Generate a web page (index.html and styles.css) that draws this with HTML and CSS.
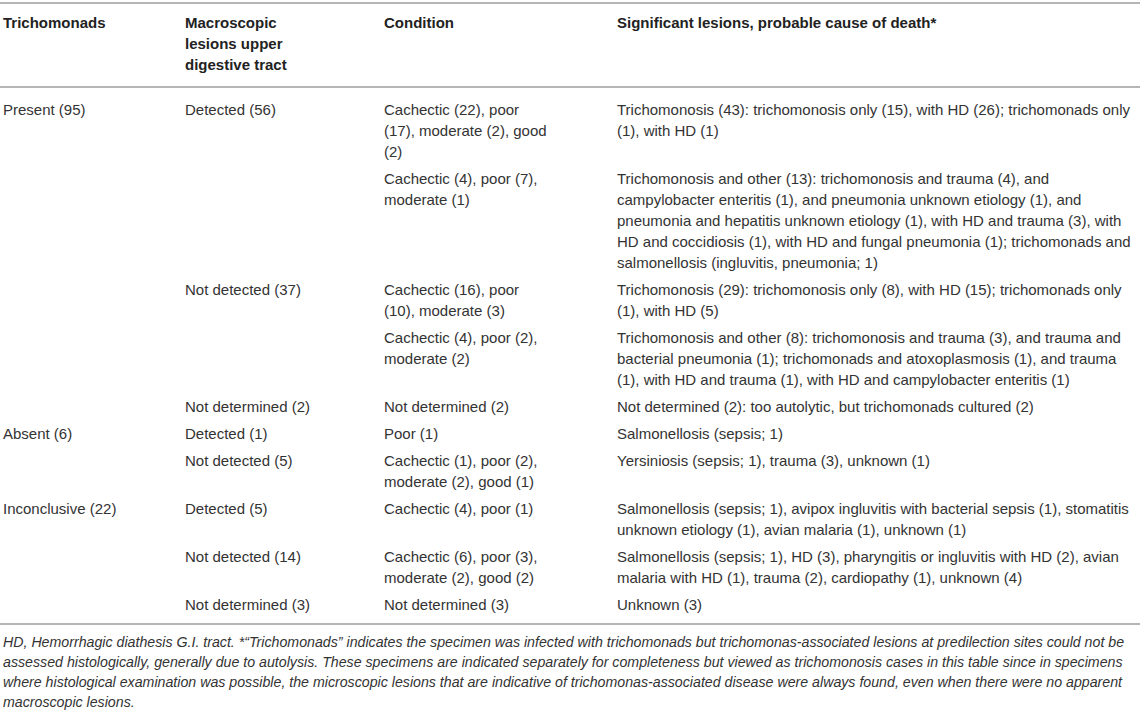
FILE: index.html
```html
<!DOCTYPE html>
<html lang="en">
<head>
<meta charset="utf-8">
<title>Table</title>
<link rel="stylesheet" href="styles.css">
</head>
<body>
<table class="data">
  <colgroup>
    <col class="c1"><col class="c2"><col class="c3"><col class="c4">
  </colgroup>
  <thead>
    <tr>
      <th><div class="w1">Trichomonads</div></th>
      <th><div class="w2">Macroscopic lesions upper digestive tract</div></th>
      <th><div class="w3">Condition</div></th>
      <th><div class="w4">Significant lesions, probable cause of death*</div></th>
    </tr>
  </thead>
  <tbody>
    <tr>
      <td>Present (95)</td>
      <td><div class="w2">Detected (56)</div></td>
      <td><div class="w3">Cachectic (22), poor (17), moderate (2), good (2)</div></td>
      <td><div class="w4">Trichomonosis (43): trichomonosis only (15), with HD (26); trichomonads only (1), with HD (1)</div></td>
    </tr>
    <tr>
      <td></td>
      <td></td>
      <td><div class="w3">Cachectic (4), poor (7), moderate (1)</div></td>
      <td><div class="w4">Trichomonosis and other (13): trichomonosis and trauma (4), and campylobacter enteritis (1), and pneumonia unknown etiology (1), and pneumonia and hepatitis unknown etiology (1), with HD and trauma (3), with HD and coccidiosis (1), with HD and fungal pneumonia (1); trichomonads and salmonellosis (ingluvitis, pneumonia; 1)</div></td>
    </tr>
    <tr>
      <td></td>
      <td><div class="w2">Not detected (37)</div></td>
      <td><div class="w3">Cachectic (16), poor (10), moderate (3)</div></td>
      <td><div class="w4">Trichomonosis (29): trichomonosis only (8), with HD (15); trichomonads only (1), with HD (5)</div></td>
    </tr>
    <tr>
      <td></td>
      <td></td>
      <td><div class="w3">Cachectic (4), poor (2), moderate (2)</div></td>
      <td><div class="w4">Trichomonosis and other (8): trichomonosis and trauma (3), and trauma and bacterial pneumonia (1); trichomonads and atoxoplasmosis (1), and trauma (1), with HD and trauma (1), with HD and campylobacter enteritis (1)</div></td>
    </tr>
    <tr>
      <td></td>
      <td><div class="w2">Not determined (2)</div></td>
      <td><div class="w3">Not determined (2)</div></td>
      <td><div class="w4">Not determined (2): too autolytic, but trichomonads cultured (2)</div></td>
    </tr>
    <tr>
      <td>Absent (6)</td>
      <td><div class="w2">Detected (1)</div></td>
      <td><div class="w3">Poor (1)</div></td>
      <td><div class="w4">Salmonellosis (sepsis; 1)</div></td>
    </tr>
    <tr>
      <td></td>
      <td><div class="w2">Not detected (5)</div></td>
      <td><div class="w3">Cachectic (1), poor (2), moderate (2), good (1)</div></td>
      <td><div class="w4">Yersiniosis (sepsis; 1), trauma (3), unknown (1)</div></td>
    </tr>
    <tr>
      <td>Inconclusive (22)</td>
      <td><div class="w2">Detected (5)</div></td>
      <td><div class="w3">Cachectic (4), poor (1)</div></td>
      <td><div class="w4">Salmonellosis (sepsis; 1), avipox ingluvitis with bacterial sepsis (1), stomatitis unknown etiology (1), avian malaria (1), unknown (1)</div></td>
    </tr>
    <tr>
      <td></td>
      <td><div class="w2">Not detected (14)</div></td>
      <td><div class="w3">Cachectic (6), poor (3), moderate (2), good (2)</div></td>
      <td><div class="w4">Salmonellosis (sepsis; 1), HD (3), pharyngitis or ingluvitis with HD (2), avian malaria with HD (1), trauma (2), cardiopathy (1), unknown (4)</div></td>
    </tr>
    <tr>
      <td></td>
      <td><div class="w2">Not determined (3)</div></td>
      <td><div class="w3">Not determined (3)</div></td>
      <td><div class="w4">Unknown (3)</div></td>
    </tr>
  </tbody>
</table>
<p class="note">HD, Hemorrhagic diathesis G.I. tract. *“Trichomonads” indicates the specimen was infected with trichomonads but trichomonas-associated lesions at predilection sites could not be assessed histologically, generally due to autolysis. These specimens are indicated separately for completeness but viewed as trichomonosis cases in this table since in specimens where histological examination was possible, the microscopic lesions that are indicative of trichomonas-associated disease were always found, even when there were no apparent macroscopic lesions.</p>
</body>
</html>
```

FILE: styles.css
```css
html, body {
  margin: 0;
  padding: 0;
  background: #ffffff;
}

body {
  font-family: "Liberation Sans", Arial, Helvetica, sans-serif;
  color: #333333;
  width: 1140px;
}

.data {
  width: 1140px;
  margin-top: 2px;
  border-collapse: collapse;
  table-layout: fixed;
  font-size: 15px;
  line-height: 21px;
}

.c1 { width: 182px; }
.c2 { width: 199px; }
.c3 { width: 233px; }
.c4 { width: 526px; }

.data thead tr {
  border-top: 2px solid #b5b5b5;
  border-bottom: 2px solid #b5b5b5;
}

.data th {
  text-align: left;
  vertical-align: top;
  font-weight: bold;
  color: #222222;
  padding: 8px 3px 11px 3px;
}

.data td {
  vertical-align: top;
  padding: 3px 3px 3px 3px;
}

.data tbody tr:first-child td {
  padding-top: 11px;
}

.data tbody tr:last-child td {
  padding-bottom: 8px;
}

.data tbody tr:last-child {
  border-bottom: 2px solid #b5b5b5;
}

.w2 { width: 135px; }
.w3 { width: 166px; }
.w4 { width: 520px; }

.note {
  margin: 7px 0 0 0;
  padding: 0 0 0 3px;
  width: 1139px;
  font-size: 14.2px;
  line-height: 20px;
  font-style: italic;
  color: #333333;
}
```
